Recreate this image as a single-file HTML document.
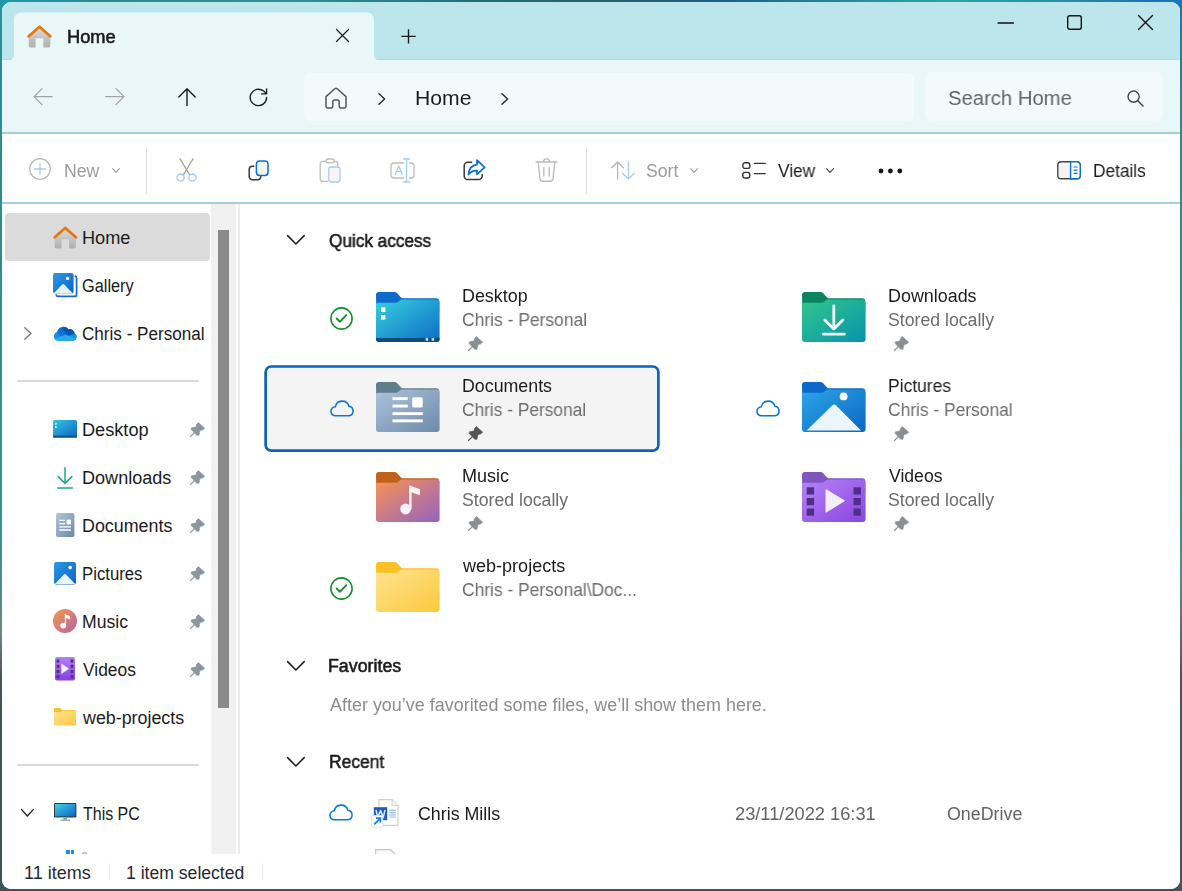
<!DOCTYPE html><html><head><meta charset="utf-8"><title>Home - File Explorer</title><style>
html,body{margin:0;padding:0}
body{width:1182px;height:891px;overflow:hidden;position:relative;font-family:"Liberation Sans",sans-serif;
 background:linear-gradient(180deg,#1f95a3 0,#2b8a98 6%,#33909b 58%,#4d8c95 65%,#6b868a 71%,#4a5658 76%,#41555a 80%,#3f5257 100%);}
.topstrip{position:absolute;left:0;top:0;width:1182px;height:4px;background:linear-gradient(90deg,#1f98a5 0,#2b8a96 100px,#2e8f9c 300px,#27707f 450px,#24606f 600px,#1f5f80 720px,#2a8a9a 850px,#30a0a8 950px,#2a8aa0 1080px,#1a72b0 1150px,#1678b8 1182px)}
.rstrip{position:absolute;left:1176px;top:0;width:6px;height:891px;background:linear-gradient(180deg,#1678b8 0,#1f80b0 40px,#2a8a99 130px,#33909b 58%,#4d8c95 65%,#5b6e72 71%,#4a5658 76%,#445a62 80%,#42565e 100%)}
.win{position:absolute;left:2px;top:2px;width:1178px;height:887px;border-radius:9px;overflow:hidden;background:#fff}
.abs{position:absolute}
.t{position:absolute;white-space:nowrap;line-height:1;transform-origin:0 0}
.g{will-change:transform}
svg{position:absolute;overflow:visible}
</style></head><body><div class="topstrip"></div><div class="rstrip"></div><div class="win"><div class="abs" style="left:-2px;top:-2px;width:1182px;height:891px"><div class="abs" style="left:0;top:0;width:1182px;height:60px;background:linear-gradient(180deg,#bde6ec 0,#bde6ec 58.6px,#b1d9df 59.2px,#b1d9df 60px)"></div><div class="abs" style="left:0;top:60px;width:1182px;height:72.5px;background:#eaf7f9"></div><svg style="left:0px;top:0px" width="400" height="60" viewBox="0 0 400 60" ><path d="M2 60.2 H8.5 Q14 60.2 14 54.4 V20.5 Q14 12.4 22 12.4 H366 Q374 12.4 374 20.5 V54.4 Q374 60.2 379.5 60.2 H390 V61 H2 Z" fill="#eaf7f9"/></svg><svg style="left:27px;top:25px" width="25" height="23" viewBox="0 0 25 23" ><defs><linearGradient id="hg295" x1="0" y1="0" x2="0" y2="1"><stop offset="0" stop-color="#dadada"/><stop offset="1" stop-color="#b0afaf"/></linearGradient></defs><path d="M1.7 11.8 L12.5 3 L23.3 11.8 V20.6 a2 2 0 0 1 -2 2 H16.3 V13.2 H8.6 V22.6 H3.7 a2 2 0 0 1 -2 -2 Z" fill="url(#hg295)"/><path d="M1.7 11.3 L12.5 1.8 L23.3 11.3" fill="none" stroke="#e8760d" stroke-width="2.8" stroke-linecap="round" stroke-linejoin="round"/></svg><span class="t g" style="left:66.96px;top:29px;color:#1a1a1a;transform:scaleX(1.0391);font-size:17.6px;-webkit-text-stroke:0.55px #1a1a1a">Home</span><svg style="left:335.5px;top:29px" width="13" height="13" viewBox="0 0 13 13" ><path d="M0.5 0.5 L12.5 12.5 M12.5 0.5 L0.5 12.5" stroke="#222" stroke-width="1.3" fill="none" stroke-linecap="round"/></svg><svg style="left:401px;top:29px" width="15" height="15" viewBox="0 0 15 15" ><path d="M7.5 0.2 V14.6 M0.3 7.4 H14.7" stroke="#1c1c1c" stroke-width="1.4" fill="none"/></svg><svg style="left:997.5px;top:21.5px" width="16" height="2" viewBox="0 0 16 2" ><path d="M0 1 H15.5" stroke="#111" stroke-width="1.3" stroke-linecap="round"/></svg><svg style="left:1067px;top:15px" width="15" height="15" viewBox="0 0 15 15" ><rect x="0.7" y="0.7" width="13.6" height="13.6" rx="2" fill="none" stroke="#111" stroke-width="1.4"/></svg><svg style="left:1138px;top:15px" width="15" height="15" viewBox="0 0 15 15" ><path d="M0.5 0.5 L14.5 14.5 M14.5 0.5 L0.5 14.5" stroke="#111" stroke-width="1.4" fill="none" stroke-linecap="round"/></svg><svg style="left:33px;top:88px" width="20" height="18" viewBox="0 0 20 18" ><path d="M19.2 8.6 H1 M9 0.6 L1 8.6 L9 16.6" fill="none" stroke="#a5a2a6" stroke-width="1.3" stroke-linecap="round" stroke-linejoin="round"/></svg><svg style="left:105px;top:88px" width="20" height="18" viewBox="0 0 20 18" ><path d="M0.8 8.6 H19 M11 0.6 L19 8.6 L11 16.6" fill="none" stroke="#a5a2a6" stroke-width="1.3" stroke-linecap="round" stroke-linejoin="round"/></svg><svg style="left:177.5px;top:88px" width="18" height="18" viewBox="0 0 18 18" ><path d="M9 17.6 V0.8 M0.8 9 L9 0.8 L17.2 9" fill="none" stroke="#1b1b1b" stroke-width="1.4" stroke-linecap="round" stroke-linejoin="round"/></svg><svg style="left:248.9px;top:87.7px" width="19" height="19" viewBox="0 0 19 19" ><path d="M17.6 9.5 A8.2 8.2 0 1 1 14.6 3.1 L17.4 5.6 M17.6 0.8 V5.8 H12.6" fill="none" stroke="#1b1b1b" stroke-width="1.35" stroke-linecap="round" stroke-linejoin="round"/></svg><div class="abs" style="left:304px;top:72.5px;width:610px;height:48.5px;border-radius:6px;background:#f3fafb"></div><svg style="left:325px;top:86.5px" width="22" height="22" viewBox="0 0 22 22" ><path d="M1 9.6 L9.8 1.7 a1.8 1.8 0 0 1 2.4 0 L21 9.6 V19.2 a1.8 1.8 0 0 1 -1.8 1.8 H15.6 a1.4 1.4 0 0 1 -1.4 -1.4 V14.4 a1.4 1.4 0 0 0 -1.4 -1.4 H9.2 a1.4 1.4 0 0 0 -1.4 1.4 V19.6 a1.4 1.4 0 0 1 -1.4 1.4 H2.8 A1.8 1.8 0 0 1 1 19.2 Z" fill="none" stroke="#555" stroke-width="1.5" stroke-linejoin="round"/></svg><svg style="left:377.5px;top:92.5px" width="8" height="12" viewBox="0 0 8 12" ><path d="M1 0.8 L6.6 6 L1 11.2" fill="none" stroke="#2a2a2a" stroke-width="1.5" stroke-linecap="round" stroke-linejoin="round"/></svg><span class="t g" style="left:414.97px;top:88px;color:#1b1b1b;transform:scaleX(1.0321);font-size:20.5px">Home</span><svg style="left:500.5px;top:92.5px" width="8" height="12" viewBox="0 0 8 12" ><path d="M1 0.8 L6.6 6 L1 11.2" fill="none" stroke="#2a2a2a" stroke-width="1.5" stroke-linecap="round" stroke-linejoin="round"/></svg><div class="abs" style="left:925px;top:71.5px;width:238px;height:49.5px;border-radius:7px;background:#f3fafb"></div><span class="t g" style="left:947.51px;top:88px;color:#5d6668;transform:scaleX(0.9879);font-size:20.5px">Search Home</span><svg style="left:1126.5px;top:90px" width="17" height="17" viewBox="0 0 17 17" ><circle cx="6.6" cy="6.6" r="5.6" fill="none" stroke="#444" stroke-width="1.4"/><path d="M10.8 10.8 L16 16" stroke="#444" stroke-width="1.5" stroke-linecap="round"/></svg><div class="abs" style="left:0;top:132px;width:1182px;height:1.6px;background:#a4d1d8"></div><div class="abs" style="left:0;top:133.6px;width:1182px;height:69px;background:#fff"></div><svg style="left:29px;top:158px" width="22" height="22" viewBox="0 0 22 22" ><circle cx="11" cy="11" r="10.3" fill="none" stroke="#b9b9b9" stroke-width="1.3"/><path d="M11 5.8 V16.2 M5.8 11 H16.2" stroke="#a6cdf0" stroke-width="1.3" stroke-linecap="round"/></svg><span class="t g" style="left:64.49px;top:163px;color:#9c9c9c;transform:scaleX(1.0057);font-size:17.6px">New</span><svg style="left:111.5px;top:167.5px" width="8" height="5" viewBox="0 0 8 5" ><path d="M0.6 0.6 L4.0 4.4 L7.4 0.6" fill="none" stroke="#9c9c9c" stroke-width="1.1" stroke-linecap="round" stroke-linejoin="round"/></svg><div class="abs" style="left:145.6px;top:146.5px;width:1.3px;height:47px;background:#e3e3e3"></div><svg style="left:175.5px;top:157.5px" width="21" height="24" viewBox="0 0 21 24" ><path d="M4 0.8 L13.8 17.2 M17 0.8 L7.2 17.2" stroke="#a3a3a3" stroke-width="1.3" fill="none" stroke-linecap="round"/><circle cx="4.6" cy="19.6" r="3.6" fill="none" stroke="#a6cdf0" stroke-width="1.3"/><circle cx="16.4" cy="19.6" r="3.6" fill="none" stroke="#a6cdf0" stroke-width="1.3"/></svg><svg style="left:247.5px;top:159.5px" width="21" height="21" viewBox="0 0 21 21" ><path d="M5.8 6.2 H4.4 A3.2 3.2 0 0 0 1.2 9.4 V16.6 A3.2 3.2 0 0 0 4.4 19.8 H9.6 A3.2 3.2 0 0 0 12.8 16.6 V16.2" fill="none" stroke="#3a3a3a" stroke-width="1.5" stroke-linecap="round"/><rect x="8.4" y="0.9" width="11.6" height="14.6" rx="3.2" fill="#f6f6f6" stroke="#0b6fd0" stroke-width="1.5"/></svg><svg style="left:319px;top:157.5px" width="22" height="25" viewBox="0 0 22 25" ><path d="M7.2 3.4 H3.6 A2.4 2.4 0 0 0 1.2 5.8 V21 A2.4 2.4 0 0 0 3.6 23.4 H8.6 M15 3.4 H16.4 A2.4 2.4 0 0 1 18.8 5.8 V8" fill="none" stroke="#bdbdbd" stroke-width="1.3" stroke-linecap="round"/><rect x="7" y="1" width="8.2" height="3.8" rx="1.7" fill="none" stroke="#bdbdbd" stroke-width="1.3"/><rect x="9.8" y="9" width="11.2" height="15" rx="2.4" fill="#f6f6f6" stroke="#a6cdf0" stroke-width="1.3"/></svg><svg style="left:390px;top:157.5px" width="25" height="25" viewBox="0 0 25 25" ><path d="M13.4 5 H4 A3 3 0 0 0 1 8 V17 A3 3 0 0 0 4 20 H13.4 M19.4 5 H21 A3 3 0 0 1 24 8 V17 A3 3 0 0 1 21 20 H19.4" fill="none" stroke="#bdbdbd" stroke-width="1.3" stroke-linecap="round"/><path d="M13.4 1 H19.6 M16.5 1 V24 M13.4 24 H19.6" stroke="#a6cdf0" stroke-width="1.3" fill="none" stroke-linecap="round"/><path d="M5.3 16.6 L8.8 8 L12.3 16.6 M6.5 13.7 H11.1" fill="none" stroke="#a6cdf0" stroke-width="1.2" stroke-linecap="round" stroke-linejoin="round"/></svg><svg style="left:463px;top:159px" width="24" height="22" viewBox="0 0 24 22" ><path d="M8.6 3.2 H4.8 A3.6 3.6 0 0 0 1.2 6.8 V17 A3.6 3.6 0 0 0 4.8 20.6 H15.6 A3.6 3.6 0 0 0 19.2 17 V15.4" fill="none" stroke="#3a3a3a" stroke-width="1.5" stroke-linecap="round"/><path d="M14 1.2 L21.6 8.4 L14 15.4 V11.6 C10.4 11.4 7.6 12.6 5.4 15.6 C5.8 10.2 8.6 6.2 14 5.6 Z" fill="#fff" stroke="#0b6fd0" stroke-width="1.7" stroke-linejoin="round"/></svg><svg style="left:534.6px;top:157.5px" width="23" height="24" viewBox="0 0 23 24" ><path d="M1 4 H22 M8.4 4 A3.1 3.1 0 0 1 14.6 4 M3.2 4 L5 20.8 A2.6 2.6 0 0 0 7.6 23.2 H15.4 A2.6 2.6 0 0 0 18 20.8 L19.8 4 M8.8 9.8 V18 M14.2 9.8 V18" fill="none" stroke="#b9bcbe" stroke-width="1.4" stroke-linecap="round" stroke-linejoin="round"/></svg><div class="abs" style="left:585.6px;top:146.5px;width:1.3px;height:47px;background:#e3e3e3"></div><svg style="left:611px;top:161px" width="24" height="19" viewBox="0 0 24 19" ><path d="M6.6 18 V1 M0.8 6.8 L6.6 1 L12.4 6.8" fill="none" stroke="#b5b5b5" stroke-width="1.3" stroke-linecap="round" stroke-linejoin="round"/><path d="M17.4 1 V18 M11.6 12.2 L17.4 18 L23.2 12.2" fill="none" stroke="#a6cdf0" stroke-width="1.3" stroke-linecap="round" stroke-linejoin="round"/></svg><span class="t g" style="left:646.00px;top:163px;color:#9c9c9c;transform:scaleX(1.0000);font-size:17.6px">Sort</span><svg style="left:690px;top:167.5px" width="8" height="5" viewBox="0 0 8 5" ><path d="M0.6 0.6 L4.0 4.4 L7.4 0.6" fill="none" stroke="#9c9c9c" stroke-width="1.1" stroke-linecap="round" stroke-linejoin="round"/></svg><svg style="left:742px;top:162px" width="24" height="17" viewBox="0 0 24 17" ><rect x="0.8" y="0.8" width="7" height="5.6" rx="2.2" fill="none" stroke="#333" stroke-width="1.4"/><rect x="0.8" y="10.4" width="7" height="5.6" rx="2.2" fill="none" stroke="#333" stroke-width="1.4"/><path d="M12.4 1.4 H23.2 M12.4 11.6 H23.2" stroke="#333" stroke-width="1.4" stroke-linecap="round"/></svg><span class="t g" style="left:778.00px;top:163px;color:#1b1b1b;transform:scaleX(0.9842);font-size:17.6px">View</span><svg style="left:826px;top:167.5px" width="8" height="5" viewBox="0 0 8 5" ><path d="M0.6 0.6 L4.0 4.4 L7.4 0.6" fill="none" stroke="#444" stroke-width="1.1" stroke-linecap="round" stroke-linejoin="round"/></svg><svg style="left:877.6px;top:167.9px" width="26" height="6" viewBox="0 0 26 6" ><circle cx="3" cy="3" r="2.4" fill="#161616"/><circle cx="12.4" cy="3" r="2.4" fill="#161616"/><circle cx="21.8" cy="3" r="2.4" fill="#161616"/></svg><svg style="left:1057px;top:161px" width="24" height="19" viewBox="0 0 24 19" ><rect x="0.8" y="0.8" width="22.4" height="17" rx="3.4" fill="#f3f3f3" stroke="#444" stroke-width="1.4"/><path d="M13.6 0.8 H19.8 A3.4 3.4 0 0 1 23.2 4.2 V14.4 A3.4 3.4 0 0 1 19.8 17.8 H13.6 Z" fill="#fff" stroke="#0b6fd0" stroke-width="1.4"/><path d="M16.6 6 H20.6 M16.6 9.2 H20.6 M16.6 12.4 H20.6" stroke="#0b6fd0" stroke-width="1.2"/></svg><span class="t g" style="left:1093.02px;top:163px;color:#1b1b1b;transform:scaleX(0.9811);font-size:17.6px">Details</span><div class="abs" style="left:0;top:202px;width:1182px;height:1.6px;background:#a4d1d8"></div><div class="abs" style="left:0;top:203.6px;width:1182px;height:650.4px;background:#fff"></div><div class="abs" style="left:5.3px;top:213px;width:204.5px;height:47.6px;border-radius:4px;background:#dbdbdb"></div><div class="abs" style="left:211px;top:203.6px;width:25px;height:650.4px;background:#f0f0f0"></div><div class="abs" style="left:218px;top:230px;width:11px;height:478px;background:#8a8a8a"></div><div class="abs" style="left:238.4px;top:203.6px;width:1.2px;height:650.4px;background:#ececec"></div><svg style="left:52.6px;top:225.8px" width="24.6" height="23" viewBox="0 0 25 23" ><defs><linearGradient id="hg751" x1="0" y1="0" x2="0" y2="1"><stop offset="0" stop-color="#dadada"/><stop offset="1" stop-color="#b0afaf"/></linearGradient></defs><path d="M1.7 11.8 L12.5 3 L23.3 11.8 V20.6 a2 2 0 0 1 -2 2 H16.3 V13.2 H8.6 V22.6 H3.7 a2 2 0 0 1 -2 -2 Z" fill="url(#hg751)"/><path d="M1.7 11.3 L12.5 1.8 L23.3 11.3" fill="none" stroke="#e8760d" stroke-width="2.8" stroke-linecap="round" stroke-linejoin="round"/></svg><span class="t" style="left:81.97px;top:230px;color:#1b1b1b;transform:scaleX(1.0326);font-size:17.6px">Home</span><svg style="left:53px;top:273px" width="24" height="24" viewBox="0 0 24 24" ><defs><linearGradient id="g1" x1="0" y1="0" x2="1" y2="1"><stop offset="0" stop-color="#2a9ae6"/><stop offset="1" stop-color="#0c62c4"/></linearGradient></defs><path d="M22.2 3.2 A1.8 1.8 0 0 1 23.6 5 V21.4 A2 2 0 0 1 21.6 23.4 H5 A1.8 1.8 0 0 1 3.2 22" fill="none" stroke="#1a69c6" stroke-width="1.7" stroke-linecap="round"/><rect x="0" y="0" width="20.6" height="20.4" rx="2" fill="url(#g1)"/><path d="M0.6 20.4 L9.2 11.6 A1.4 1.4 0 0 1 11.2 11.6 L20 20.4 Z" fill="#e6f3fd"/><circle cx="14.6" cy="5.4" r="1.7" fill="#fff"/></svg><span class="t" style="left:82.07px;top:278px;color:#1b1b1b;transform:scaleX(0.9273);font-size:17.6px">Gallery</span><svg style="left:24px;top:327px" width="8" height="13" viewBox="0 0 8 13" ><path d="M0.8 0.8 L7 6.5 L0.8 12.2" fill="none" stroke="#7a7a7a" stroke-width="1.4" stroke-linecap="round" stroke-linejoin="round"/></svg><svg style="left:53px;top:325.3px" width="24" height="16" viewBox="0 0 24 16" ><path d="M5 15.8 A4.6 4.6 0 0 1 4.4 6.8 A6.2 6.2 0 0 1 15.4 4.2 A5.2 5.2 0 0 1 21.6 8.6 A3.8 3.8 0 0 1 20.4 15.8 Z" fill="#1490df"/><path d="M4.4 6.8 A6.2 6.2 0 0 1 15.4 4.2 A5.2 5.2 0 0 1 21.6 8.6 L9 13.4 Z" fill="#0f6fce"/><path d="M9.2 3.2 A6.2 6.2 0 0 1 15.4 4.2 A5.2 5.2 0 0 1 21.6 8.6 L14.6 11.2 Z" fill="#0a56b0"/><path d="M1.4 14 L12.4 9.4 L23 13.6 A3.8 3.8 0 0 1 20.4 15.8 H5 A4.6 4.6 0 0 1 1.4 14 Z" fill="#29a8ea"/></svg><span class="t" style="left:82.03px;top:326px;color:#1b1b1b;transform:scaleX(0.9718);font-size:17.6px">Chris - Personal</span><div class="abs" style="left:17.3px;top:380.2px;width:181.5px;height:1.4px;background:#d8d8d8"></div><svg style="left:53px;top:420px" width="24" height="18" viewBox="0 0 24 18" ><defs><linearGradient id="g2" x1="0" y1="0" x2="1" y2="1"><stop offset="0" stop-color="#35c8e0"/><stop offset="1" stop-color="#0c62c4"/></linearGradient></defs><rect width="24" height="17.6" rx="1.6" fill="url(#g2)"/><rect x="0" y="15.6" width="24" height="2" fill="#0d528c"/><rect x="2" y="3" width="1.6" height="1.6" fill="#fff"/><rect x="2" y="6.2" width="1.6" height="1.6" fill="#fff"/></svg><span class="t" style="left:81.97px;top:422px;color:#1b1b1b;transform:scaleX(1.0317);font-size:17.6px">Desktop</span><svg style="left:57px;top:466.6px" width="16" height="22" viewBox="0 0 16 22" ><path d="M8 0.8 V16.2 M1.2 9.6 L8 16.4 L14.8 9.6 M0.6 21 H15.4" fill="none" stroke="#17a98c" stroke-width="1.5" stroke-linecap="round" stroke-linejoin="round"/></svg><span class="t" style="left:81.97px;top:470px;color:#1b1b1b;transform:scaleX(1.0267);font-size:17.6px">Downloads</span><svg style="left:55.6px;top:513px" width="18.4" height="24" viewBox="0 0 18.4 24" ><defs><linearGradient id="g3" x1="0" y1="0" x2="1" y2="1"><stop offset="0" stop-color="#b3c6dd"/><stop offset="1" stop-color="#6a88a8"/></linearGradient></defs><rect width="18.4" height="24" rx="1.8" fill="url(#g3)"/><path d="M3.4 7.4 H9 M3.4 10.6 H9 M3.4 13.8 H15 M3.4 17 H15" stroke="#fff" stroke-width="1.3"/><rect x="10.6" y="6.6" width="4.4" height="4.8" fill="#fff"/></svg><span class="t" style="left:81.98px;top:518px;color:#1b1b1b;transform:scaleX(1.0159);font-size:17.6px">Documents</span><svg style="left:54px;top:561.8px" width="22" height="22.4" viewBox="0 0 22 22.4" ><defs><linearGradient id="g4" x1="0" y1="0" x2="1" y2="1"><stop offset="0" stop-color="#2a9ae6"/><stop offset="1" stop-color="#0c62c4"/></linearGradient></defs><rect width="22" height="22.4" rx="2.2" fill="url(#g4)"/><path d="M0.8 22 L10 12.4 A1.4 1.4 0 0 1 12 12.4 L21.2 22 Z" fill="#e8f4fe"/><circle cx="16.2" cy="5.6" r="1.8" fill="#fff"/></svg><span class="t" style="left:82.05px;top:566px;color:#1b1b1b;transform:scaleX(0.9516);font-size:17.6px">Pictures</span><svg style="left:53px;top:609px" width="24" height="24" viewBox="0 0 24 24" ><defs><linearGradient id="g5" x1="0" y1="0" x2="1" y2="1"><stop offset="0" stop-color="#f59a4c"/><stop offset="1" stop-color="#b561a6"/></linearGradient></defs><circle cx="12" cy="12" r="12" fill="url(#g5)"/><circle cx="10.2" cy="16.6" r="2.9" fill="#fff"/><path d="M11.8 16.6 V5 L16.8 7 V10.4 L13.1 9 V16.6 Z" fill="#fff"/></svg><span class="t" style="left:82.00px;top:614px;color:#1b1b1b;transform:scaleX(1.0000);font-size:17.6px">Music</span><svg style="left:55px;top:657.3px" width="20" height="23.4" viewBox="0 0 20 23.4" ><defs><linearGradient id="g6" x1="0" y1="0" x2="0" y2="1"><stop offset="0" stop-color="#b581f6"/><stop offset="1" stop-color="#8540dd"/></linearGradient></defs><rect width="20" height="23.4" rx="2" fill="url(#g6)"/><rect x="1.6" y="2.6" width="2.8" height="3" fill="#4d2f86"/><rect x="1.6" y="7.8" width="2.8" height="3" fill="#4d2f86"/><rect x="1.6" y="13" width="2.8" height="3" fill="#4d2f86"/><rect x="1.6" y="18.2" width="2.8" height="3" fill="#4d2f86"/><rect x="15.6" y="2.6" width="2.8" height="3" fill="#4d2f86"/><rect x="15.6" y="7.8" width="2.8" height="3" fill="#4d2f86"/><rect x="15.6" y="13" width="2.8" height="3" fill="#4d2f86"/><rect x="15.6" y="18.2" width="2.8" height="3" fill="#4d2f86"/><path d="M6.4 6.6 L14 11.8 L6.4 17 Z" fill="#f3f0f6"/></svg><span class="t" style="left:83.00px;top:662px;color:#1b1b1b;transform:scaleX(0.9887);font-size:17.6px">Videos</span><svg style="left:54px;top:707.6px" width="22" height="17.6" viewBox="0 0 22 17.6" ><defs><linearGradient id="g7" x1="0" y1="0" x2="1" y2="1"><stop offset="0" stop-color="#ffe391"/><stop offset="1" stop-color="#fcc93e"/></linearGradient></defs><path d="M0 1.2 A1.2 1.2 0 0 1 1.2 0 H6 L8.4 2 H20.8 A1.2 1.2 0 0 1 22 3.2 V8 H0 Z" fill="#fbc123"/><path d="M0 4 H6.8 L8.4 2.8 H21 A1 1 0 0 1 22 3.8 V16.4 A1.2 1.2 0 0 1 20.8 17.6 H1.2 A1.2 1.2 0 0 1 0 16.4 Z" fill="url(#g7)"/></svg><span class="t" style="left:83.00px;top:710px;color:#1b1b1b;transform:scaleX(1.0140);font-size:17.6px">web-projects</span><svg style="left:190px;top:421.6px" width="15.2" height="15.2" viewBox="0 0 15 15" ><path d="M8.3 0.5 L14.5 6.1 L12.2 8 L9.9 8.5 L8.8 13.2 L6.6 13.1 L1.2 7.5 L1.3 5.8 L5.9 4.9 L6.5 2.2 Z" fill="#8b969e" stroke="#8b969e" stroke-width=".6" stroke-linejoin="round"/><path d="M4.6 10.2 L0.4 14.3" stroke="#8b969e" stroke-width="1.1" stroke-linecap="round"/></svg><svg style="left:190px;top:469.6px" width="15.2" height="15.2" viewBox="0 0 15 15" ><path d="M8.3 0.5 L14.5 6.1 L12.2 8 L9.9 8.5 L8.8 13.2 L6.6 13.1 L1.2 7.5 L1.3 5.8 L5.9 4.9 L6.5 2.2 Z" fill="#8b969e" stroke="#8b969e" stroke-width=".6" stroke-linejoin="round"/><path d="M4.6 10.2 L0.4 14.3" stroke="#8b969e" stroke-width="1.1" stroke-linecap="round"/></svg><svg style="left:190px;top:517.6px" width="15.2" height="15.2" viewBox="0 0 15 15" ><path d="M8.3 0.5 L14.5 6.1 L12.2 8 L9.9 8.5 L8.8 13.2 L6.6 13.1 L1.2 7.5 L1.3 5.8 L5.9 4.9 L6.5 2.2 Z" fill="#8b969e" stroke="#8b969e" stroke-width=".6" stroke-linejoin="round"/><path d="M4.6 10.2 L0.4 14.3" stroke="#8b969e" stroke-width="1.1" stroke-linecap="round"/></svg><svg style="left:190px;top:565.6px" width="15.2" height="15.2" viewBox="0 0 15 15" ><path d="M8.3 0.5 L14.5 6.1 L12.2 8 L9.9 8.5 L8.8 13.2 L6.6 13.1 L1.2 7.5 L1.3 5.8 L5.9 4.9 L6.5 2.2 Z" fill="#8b969e" stroke="#8b969e" stroke-width=".6" stroke-linejoin="round"/><path d="M4.6 10.2 L0.4 14.3" stroke="#8b969e" stroke-width="1.1" stroke-linecap="round"/></svg><svg style="left:190px;top:613.6px" width="15.2" height="15.2" viewBox="0 0 15 15" ><path d="M8.3 0.5 L14.5 6.1 L12.2 8 L9.9 8.5 L8.8 13.2 L6.6 13.1 L1.2 7.5 L1.3 5.8 L5.9 4.9 L6.5 2.2 Z" fill="#8b969e" stroke="#8b969e" stroke-width=".6" stroke-linejoin="round"/><path d="M4.6 10.2 L0.4 14.3" stroke="#8b969e" stroke-width="1.1" stroke-linecap="round"/></svg><svg style="left:190px;top:661.6px" width="15.2" height="15.2" viewBox="0 0 15 15" ><path d="M8.3 0.5 L14.5 6.1 L12.2 8 L9.9 8.5 L8.8 13.2 L6.6 13.1 L1.2 7.5 L1.3 5.8 L5.9 4.9 L6.5 2.2 Z" fill="#8b969e" stroke="#8b969e" stroke-width=".6" stroke-linejoin="round"/><path d="M4.6 10.2 L0.4 14.3" stroke="#8b969e" stroke-width="1.1" stroke-linecap="round"/></svg><div class="abs" style="left:17.3px;top:764.2px;width:181.5px;height:1.4px;background:#d8d8d8"></div><svg style="left:20.8px;top:809px" width="12.8" height="7.6" viewBox="0 0 12.8 7.6" ><path d="M0.6 0.6 L6.4 7.0 L12.200000000000001 0.6" fill="none" stroke="#222" stroke-width="1.4" stroke-linecap="round" stroke-linejoin="round"/></svg><svg style="left:53.8px;top:803.4px" width="22.4" height="18" viewBox="0 0 22.4 18" ><defs><linearGradient id="g8" x1="0" y1="0" x2="1" y2="1"><stop offset="0" stop-color="#3fd0e2"/><stop offset="1" stop-color="#0d63c6"/></linearGradient></defs><rect x="0" y="0" width="22.4" height="14.6" rx="1.4" fill="#2f3d46"/><rect x="1" y="1" width="20.4" height="12.4" fill="url(#g8)"/><rect x="9.4" y="14.6" width="3.6" height="2" fill="#8d979e"/><rect x="6.4" y="16.4" width="9.6" height="1.4" rx=".5" fill="#8d979e"/></svg><span class="t" style="left:82.50px;top:806px;color:#1b1b1b;transform:scaleX(0.9081);font-size:17.6px">This PC</span><div class="abs" style="left:66px;top:850.4px;width:3.6px;height:3.6px;background:#1b8fe0"></div><div class="abs" style="left:70.8px;top:850.4px;width:3.6px;height:3.6px;background:#1b8fe0"></div><svg style="left:81px;top:849.6px" width="7" height="5" viewBox="0 0 7 5" ><path d="M1 5 A2.6 2.6 0 0 1 6 4.4" fill="none" stroke="#aab4c6" stroke-width="1.3"/></svg><svg style="left:287.4px;top:235.4px" width="17.8" height="9.6" viewBox="0 0 17.8 9.6" ><path d="M0.6 0.6 L8.9 9.0 L17.2 0.6" fill="none" stroke="#1b1b1b" stroke-width="1.5" stroke-linecap="round" stroke-linejoin="round"/></svg><span class="t g" style="left:329.30px;top:233px;color:#1b1b1b;transform:scaleX(0.9762);font-size:17.6px;-webkit-text-stroke:0.55px #1b1b1b">Quick access</span><svg style="left:264px;top:364.8px" width="396" height="87.2" viewBox="0 0 396 87.2" ><rect x="1.6" y="1.5" width="392.8" height="84.2" rx="5.6" fill="#f4f4f4" stroke="#0963c1" stroke-width="2.7"/></svg><svg style="left:376.2px;top:291.7px" width="63.6" height="50" viewBox="0 0 63.6 50" ><defs><linearGradient id="g9" x1="0" y1="0" x2="1" y2="1"><stop offset="0" stop-color="#37cfdd"/><stop offset="1" stop-color="#0d6cc6"/></linearGradient></defs><path d="M0 3 A3 3 0 0 1 3 0 H18.4 A4 4 0 0 1 21.2 1.2 L24.8 5.3 A3 3 0 0 0 27 6.2 H60.2 A3 3 0 0 1 63.2 9.2 V20 H0.3 Z" fill="#0e6bcb"/><path d="M0 12.4 A1.6 1.6 0 0 1 1.6 10.8 H20 A3 3 0 0 0 22 10 L24 8.3 A3 3 0 0 1 26 7.6 H61.2 A2.4 2.4 0 0 1 63.6 10 V47 A3 3 0 0 1 60.6 50 H3 A3 3 0 0 1 0 47 Z" fill="url(#g9)"/><path d="M0 46 H63.6 V47 A3 3 0 0 1 60.6 50 H3 A3 3 0 0 1 0 47 Z" fill="#0f4c78"/><rect x="5" y="15.4" width="4.4" height="4.6" fill="#fff"/><rect x="5" y="23" width="4.4" height="4.6" fill="#fff"/><rect x="49.6" y="46" width="2.6" height="2.8" fill="#c9d3e3"/><rect x="55.6" y="46" width="2.6" height="2.8" fill="#c9d3e3"/></svg><span class="t g" style="left:461.98px;top:288px;color:#1b1b1b;transform:scaleX(1.0159);font-size:17.6px">Desktop</span><span class="t g" style="left:462.01px;top:312px;color:#6c6c6c;transform:scaleX(0.9919);font-size:17.6px">Chris - Personal</span><svg style="left:468.1px;top:336.09999999999997px" width="15.2" height="15.2" viewBox="0 0 15 15" ><path d="M8.3 0.5 L14.5 6.1 L12.2 8 L9.9 8.5 L8.8 13.2 L6.6 13.1 L1.2 7.5 L1.3 5.8 L5.9 4.9 L6.5 2.2 Z" fill="#8a8f94" stroke="#8a8f94" stroke-width=".6" stroke-linejoin="round"/><path d="M4.6 10.2 L0.4 14.3" stroke="#8a8f94" stroke-width="1.1" stroke-linecap="round"/></svg><svg style="left:329.59999999999997px;top:306.5px" width="23" height="23" viewBox="0 0 23 23" ><circle cx="11.5" cy="11.5" r="10.6" fill="none" stroke="#16902a" stroke-width="1.6"/><path d="M6.7 11.5 L10 14.7 L16.3 8.2" fill="none" stroke="#16902a" stroke-width="1.9" stroke-linecap="round" stroke-linejoin="round"/></svg><svg style="left:376.2px;top:381.7px" width="63.6" height="50" viewBox="0 0 63.6 50" ><defs><linearGradient id="g10" x1="0" y1="0" x2="1" y2="1"><stop offset="0" stop-color="#aec3db"/><stop offset="1" stop-color="#6c8aaa"/></linearGradient></defs><path d="M0 3 A3 3 0 0 1 3 0 H18.4 A4 4 0 0 1 21.2 1.2 L24.8 5.3 A3 3 0 0 0 27 6.2 H60.2 A3 3 0 0 1 63.2 9.2 V20 H0.3 Z" fill="#5f7d8a"/><path d="M0 12.4 A1.6 1.6 0 0 1 1.6 10.8 H20 A3 3 0 0 0 22 10 L24 8.3 A3 3 0 0 1 26 7.6 H61.2 A2.4 2.4 0 0 1 63.6 10 V47 A3 3 0 0 1 60.6 50 H3 A3 3 0 0 1 0 47 Z" fill="url(#g10)"/><rect x="16.5" y="15.2" width="15.3" height="2.9" fill="#fff"/><rect x="16.5" y="22.6" width="15.3" height="2.9" fill="#fff"/><rect x="16.5" y="30.2" width="30.3" height="2.9" fill="#fff"/><rect x="16.5" y="37.4" width="30.3" height="2.9" fill="#fff"/><rect x="36.2" y="15.2" width="10.6" height="10.3" rx="1.6" fill="#fff"/></svg><span class="t g" style="left:461.99px;top:378px;color:#1b1b1b;transform:scaleX(1.0114);font-size:17.6px">Documents</span><span class="t g" style="left:462.02px;top:402px;color:#6c6c6c;transform:scaleX(0.9839);font-size:17.6px">Chris - Personal</span><svg style="left:468.1px;top:426.09999999999997px" width="15.2" height="15.2" viewBox="0 0 15 15" ><path d="M8.3 0.5 L14.5 6.1 L12.2 8 L9.9 8.5 L8.8 13.2 L6.6 13.1 L1.2 7.5 L1.3 5.8 L5.9 4.9 L6.5 2.2 Z" fill="#555" stroke="#555" stroke-width=".6" stroke-linejoin="round"/><path d="M4.6 10.2 L0.4 14.3" stroke="#555" stroke-width="1.1" stroke-linecap="round"/></svg><svg style="left:329.8px;top:399.7px" width="24.5" height="16.6" viewBox="0 0 24.5 16.6" ><path d="M5.6 15.8 A4.5 4.5 0 0 1 5.3 6.8 A7 7 0 0 1 18.9 6.2 A4.85 4.85 0 0 1 18.9 15.8 Z" fill="none" stroke="#0a78d7" stroke-width="1.55" stroke-linejoin="round"/></svg><svg style="left:376.2px;top:471.7px" width="63.6" height="50" viewBox="0 0 63.6 50" ><defs><linearGradient id="g11" x1="0" y1="0" x2="1" y2="1"><stop offset="0" stop-color="#fa9355"/><stop offset="1" stop-color="#9462c0"/></linearGradient></defs><path d="M0 3 A3 3 0 0 1 3 0 H18.4 A4 4 0 0 1 21.2 1.2 L24.8 5.3 A3 3 0 0 0 27 6.2 H60.2 A3 3 0 0 1 63.2 9.2 V20 H0.3 Z" fill="#c0621b"/><path d="M0 12.4 A1.6 1.6 0 0 1 1.6 10.8 H20 A3 3 0 0 0 22 10 L24 8.3 A3 3 0 0 1 26 7.6 H61.2 A2.4 2.4 0 0 1 63.6 10 V47 A3 3 0 0 1 60.6 50 H3 A3 3 0 0 1 0 47 Z" fill="url(#g11)"/><circle cx="29.6" cy="37" r="5.4" fill="#f6f3f4"/><path d="M33.2 37 V13.2 L44 17.2 V23.2 L35.6 20.2 V37 Z" fill="#f6f3f4"/></svg><span class="t g" style="left:461.98px;top:468px;color:#1b1b1b;transform:scaleX(1.0222);font-size:17.6px">Music</span><span class="t g" style="left:462.00px;top:492px;color:#6c6c6c;transform:scaleX(1.0048);font-size:17.6px">Stored locally</span><svg style="left:468.1px;top:516.1px" width="15.2" height="15.2" viewBox="0 0 15 15" ><path d="M8.3 0.5 L14.5 6.1 L12.2 8 L9.9 8.5 L8.8 13.2 L6.6 13.1 L1.2 7.5 L1.3 5.8 L5.9 4.9 L6.5 2.2 Z" fill="#8a8f94" stroke="#8a8f94" stroke-width=".6" stroke-linejoin="round"/><path d="M4.6 10.2 L0.4 14.3" stroke="#8a8f94" stroke-width="1.1" stroke-linecap="round"/></svg><svg style="left:376.2px;top:561.7px" width="63.6" height="50" viewBox="0 0 63.6 50" ><defs><linearGradient id="g12" x1="0" y1="0" x2="1" y2="1"><stop offset="0" stop-color="#ffe391"/><stop offset="1" stop-color="#fcc93e"/></linearGradient></defs><path d="M0 3 A3 3 0 0 1 3 0 H18.4 A4 4 0 0 1 21.2 1.2 L24.8 5.3 A3 3 0 0 0 27 6.2 H60.2 A3 3 0 0 1 63.2 9.2 V20 H0.3 Z" fill="#fbc123"/><path d="M0 12.4 A1.6 1.6 0 0 1 1.6 10.8 H20 A3 3 0 0 0 22 10 L24 8.3 A3 3 0 0 1 26 7.6 H61.2 A2.4 2.4 0 0 1 63.6 10 V47 A3 3 0 0 1 60.6 50 H3 A3 3 0 0 1 0 47 Z" fill="url(#g12)"/></svg><span class="t g" style="left:463.00px;top:558px;color:#1b1b1b;transform:scaleX(1.0250);font-size:17.6px">web-projects</span><span class="t g" style="left:462.01px;top:582px;color:#6c6c6c;transform:scaleX(0.9886);font-size:17.6px">Chris - Personal\Doc...</span><svg style="left:329.59999999999997px;top:576.5px" width="23" height="23" viewBox="0 0 23 23" ><circle cx="11.5" cy="11.5" r="10.6" fill="none" stroke="#16902a" stroke-width="1.6"/><path d="M6.7 11.5 L10 14.7 L16.3 8.2" fill="none" stroke="#16902a" stroke-width="1.9" stroke-linecap="round" stroke-linejoin="round"/></svg><svg style="left:802.2px;top:291.7px" width="63.6" height="50" viewBox="0 0 63.6 50" ><defs><linearGradient id="g13" x1="0" y1="0" x2="1" y2="1"><stop offset="0" stop-color="#31c68c"/><stop offset="1" stop-color="#0894ac"/></linearGradient></defs><path d="M0 3 A3 3 0 0 1 3 0 H18.4 A4 4 0 0 1 21.2 1.2 L24.8 5.3 A3 3 0 0 0 27 6.2 H60.2 A3 3 0 0 1 63.2 9.2 V20 H0.3 Z" fill="#0c8462"/><path d="M0 12.4 A1.6 1.6 0 0 1 1.6 10.8 H20 A3 3 0 0 0 22 10 L24 8.3 A3 3 0 0 1 26 7.6 H61.2 A2.4 2.4 0 0 1 63.6 10 V47 A3 3 0 0 1 60.6 50 H3 A3 3 0 0 1 0 47 Z" fill="url(#g13)"/><path d="M31.8 14 V36.6 M22.8 28 L31.8 37 L40.8 28 M21.4 42.2 H42.4" fill="none" stroke="#f4fbfa" stroke-width="2.8" stroke-linecap="round" stroke-linejoin="round"/></svg><span class="t g" style="left:887.98px;top:288px;color:#1b1b1b;transform:scaleX(1.0174);font-size:17.6px">Downloads</span><span class="t g" style="left:888.00px;top:312px;color:#6c6c6c;transform:scaleX(1.0048);font-size:17.6px">Stored locally</span><svg style="left:894.1px;top:336.09999999999997px" width="15.2" height="15.2" viewBox="0 0 15 15" ><path d="M8.3 0.5 L14.5 6.1 L12.2 8 L9.9 8.5 L8.8 13.2 L6.6 13.1 L1.2 7.5 L1.3 5.8 L5.9 4.9 L6.5 2.2 Z" fill="#8a8f94" stroke="#8a8f94" stroke-width=".6" stroke-linejoin="round"/><path d="M4.6 10.2 L0.4 14.3" stroke="#8a8f94" stroke-width="1.1" stroke-linecap="round"/></svg><svg style="left:802.2px;top:381.7px" width="63.6" height="50" viewBox="0 0 63.6 50" ><defs><linearGradient id="g14" x1="0" y1="0" x2="1" y2="1"><stop offset="0" stop-color="#2ba6e6"/><stop offset="1" stop-color="#0c66c2"/></linearGradient></defs><path d="M0 3 A3 3 0 0 1 3 0 H18.4 A4 4 0 0 1 21.2 1.2 L24.8 5.3 A3 3 0 0 0 27 6.2 H60.2 A3 3 0 0 1 63.2 9.2 V20 H0.3 Z" fill="#0b6ac9"/><path d="M0 12.4 A1.6 1.6 0 0 1 1.6 10.8 H20 A3 3 0 0 0 22 10 L24 8.3 A3 3 0 0 1 26 7.6 H61.2 A2.4 2.4 0 0 1 63.6 10 V47 A3 3 0 0 1 60.6 50 H3 A3 3 0 0 1 0 47 Z" fill="url(#g14)"/><path d="M4.6 48.4 L30.2 23.6 A2.8 2.8 0 0 1 34.2 23.6 L59 48.4 Z" fill="#eaf5fe"/><circle cx="41.6" cy="14.4" r="3.9" fill="#fff"/></svg><span class="t g" style="left:888.01px;top:378px;color:#1b1b1b;transform:scaleX(0.9919);font-size:17.6px">Pictures</span><span class="t g" style="left:888.01px;top:402px;color:#6c6c6c;transform:scaleX(0.9879);font-size:17.6px">Chris - Personal</span><svg style="left:894.1px;top:426.09999999999997px" width="15.2" height="15.2" viewBox="0 0 15 15" ><path d="M8.3 0.5 L14.5 6.1 L12.2 8 L9.9 8.5 L8.8 13.2 L6.6 13.1 L1.2 7.5 L1.3 5.8 L5.9 4.9 L6.5 2.2 Z" fill="#8a8f94" stroke="#8a8f94" stroke-width=".6" stroke-linejoin="round"/><path d="M4.6 10.2 L0.4 14.3" stroke="#8a8f94" stroke-width="1.1" stroke-linecap="round"/></svg><svg style="left:755.8000000000001px;top:399.7px" width="24.5" height="16.6" viewBox="0 0 24.5 16.6" ><path d="M5.6 15.8 A4.5 4.5 0 0 1 5.3 6.8 A7 7 0 0 1 18.9 6.2 A4.85 4.85 0 0 1 18.9 15.8 Z" fill="none" stroke="#0a78d7" stroke-width="1.55" stroke-linejoin="round"/></svg><svg style="left:802.2px;top:471.7px" width="63.6" height="50" viewBox="0 0 63.6 50" ><defs><linearGradient id="g16" x1="0" y1="0" x2="1" y2="1"><stop offset="0" stop-color="#b784f7"/><stop offset="1" stop-color="#8844e0"/></linearGradient></defs><path d="M0 3 A3 3 0 0 1 3 0 H18.4 A4 4 0 0 1 21.2 1.2 L24.8 5.3 A3 3 0 0 0 27 6.2 H60.2 A3 3 0 0 1 63.2 9.2 V20 H0.3 Z" fill="#7e55bf"/><path d="M0 12.4 A1.6 1.6 0 0 1 1.6 10.8 H20 A3 3 0 0 0 22 10 L24 8.3 A3 3 0 0 1 26 7.6 H61.2 A2.4 2.4 0 0 1 63.6 10 V47 A3 3 0 0 1 60.6 50 H3 A3 3 0 0 1 0 47 Z" fill="url(#g16)"/><rect x="4.7" y="15.3" width="7.4" height="7.2" fill="#4d2f86"/><rect x="4.7" y="26" width="7.4" height="7.2" fill="#4d2f86"/><rect x="4.7" y="36.5" width="7.4" height="7.2" fill="#4d2f86"/><rect x="51.5" y="15.3" width="7.4" height="7.2" fill="#4d2f86"/><rect x="51.5" y="26" width="7.4" height="7.2" fill="#4d2f86"/><rect x="51.5" y="36.5" width="7.4" height="7.2" fill="#4d2f86"/><path d="M24 17.6 L42.4 28.8 L24 40.2 Z" fill="#f2f0f4" stroke="#f2f0f4" stroke-width="1" stroke-linejoin="round"/></svg><span class="t g" style="left:889.00px;top:468px;color:#1b1b1b;transform:scaleX(1.0000);font-size:17.6px">Videos</span><span class="t g" style="left:888.00px;top:492px;color:#6c6c6c;transform:scaleX(1.0048);font-size:17.6px">Stored locally</span><svg style="left:894.1px;top:516.1px" width="15.2" height="15.2" viewBox="0 0 15 15" ><path d="M8.3 0.5 L14.5 6.1 L12.2 8 L9.9 8.5 L8.8 13.2 L6.6 13.1 L1.2 7.5 L1.3 5.8 L5.9 4.9 L6.5 2.2 Z" fill="#8a8f94" stroke="#8a8f94" stroke-width=".6" stroke-linejoin="round"/><path d="M4.6 10.2 L0.4 14.3" stroke="#8a8f94" stroke-width="1.1" stroke-linecap="round"/></svg><svg style="left:287.4px;top:661.4px" width="17.8" height="9.6" viewBox="0 0 17.8 9.6" ><path d="M0.6 0.6 L8.9 9.0 L17.2 0.6" fill="none" stroke="#1b1b1b" stroke-width="1.5" stroke-linecap="round" stroke-linejoin="round"/></svg><span class="t g" style="left:328.49px;top:658px;color:#1b1b1b;transform:scaleX(1.0113);font-size:17.6px;-webkit-text-stroke:0.55px #1b1b1b">Favorites</span><span class="t g" style="left:329.50px;top:697px;color:#8c8c8c;transform:scaleX(1.0199);font-size:17.6px">After you’ve favorited some files, we’ll show them here.</span><svg style="left:287.4px;top:757.2px" width="17.8" height="9.6" viewBox="0 0 17.8 9.6" ><path d="M0.6 0.6 L8.9 9.0 L17.2 0.6" fill="none" stroke="#1b1b1b" stroke-width="1.5" stroke-linecap="round" stroke-linejoin="round"/></svg><span class="t g" style="left:328.51px;top:754px;color:#1b1b1b;transform:scaleX(0.9909);font-size:17.6px;-webkit-text-stroke:0.55px #1b1b1b">Recent</span><svg style="left:329px;top:804.2px" width="24.5" height="16.6" viewBox="0 0 24.5 16.6" ><path d="M5.6 15.8 A4.5 4.5 0 0 1 5.3 6.8 A7 7 0 0 1 18.9 6.2 A4.85 4.85 0 0 1 18.9 15.8 Z" fill="none" stroke="#0a78d7" stroke-width="1.55" stroke-linejoin="round"/></svg><svg style="left:371px;top:799px" width="28" height="29" viewBox="0 0 28 29" ><path d="M8 0.6 H21 L27 6.6 V26.4 H8 Z" fill="#fff" stroke="#cfcfcf" stroke-width="1.1" stroke-linejoin="round"/><path d="M21 0.6 V6.6 H27" fill="#f4f4f4" stroke="#cfcfcf" stroke-width="1" stroke-linejoin="round"/><rect x="2.8" y="8.2" width="13.4" height="13" fill="#1b5ebe"/><path d="M5 11 L6.8 18.4 L9.5 11.6 L12.2 18.4 L14 11" fill="none" stroke="#dfe9f8" stroke-width="1.5" stroke-linejoin="round"/><path d="M18.2 11.4 H24.8 M18.2 13.6 H24.8 M18.2 15.8 H24.8 M18.2 18 H24.8" stroke="#9dbbe6" stroke-width="1.2"/><rect x="0.5" y="16.6" width="11.2" height="11.6" rx="1" fill="#fafcfe" stroke="#dde3ea" stroke-width=".8"/><path d="M3.2 25.4 L9 19.6 M5 19.2 H9.4 V23.6" fill="none" stroke="#1683dd" stroke-width="1.7" stroke-linejoin="miter"/></svg><span class="t g" style="left:417.99px;top:806px;color:#1b1b1b;transform:scaleX(1.0125);font-size:17.6px">Chris Mills</span><span class="t g" style="left:734.96px;top:806px;color:#646464;transform:scaleX(1.0373);font-size:17.6px">23/11/2022 16:31</span><span class="t g" style="left:946.99px;top:806px;color:#646464;transform:scaleX(1.0137);font-size:17.6px">OneDrive</span><svg style="left:374.6px;top:849px" width="21" height="5" viewBox="0 0 21 5" ><path d="M0.6 5 V0.6 H15.6 L20 5" fill="#f8f8f8" stroke="#c4c4c4" stroke-width="1.1"/></svg><div class="abs" style="left:0;top:854px;width:1182px;height:37px;background:#fff"></div><span class="t" style="left:24.38px;top:865px;color:#1f2a36;transform:scaleX(1.0250);font-size:17.6px">11 items</span><div class="abs" style="left:108.6px;top:863px;width:1.2px;height:17px;background:#ebebeb"></div><span class="t" style="left:126.00px;top:865px;color:#1f2a36;transform:scaleX(1.0000);font-size:17.6px">1 item selected</span><div class="abs" style="left:261.6px;top:863px;width:1.2px;height:17px;background:#ebebeb"></div></div></div></body></html>
